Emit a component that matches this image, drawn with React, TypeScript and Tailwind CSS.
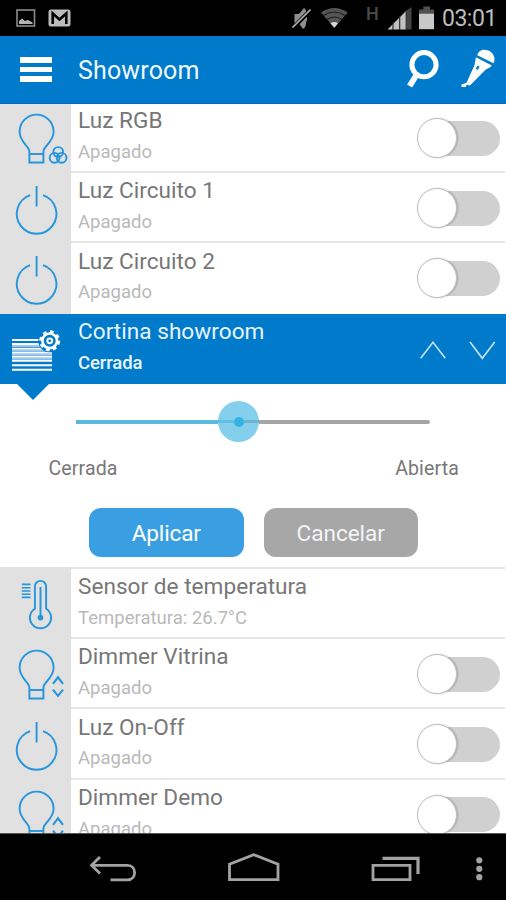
import React from "react";

type IconName = "rgb" | "power" | "thermo" | "dimmer";

function Bulb() {
  return (
    <g>
      <path d="M29.4 50.5 C29.4 45 19.6 41.5 19.6 30.6 A17 17 0 0 1 53.6 30.6 C53.6 41.5 43.4 45 43.4 50.5 V61.5 H29.4 Z" />
      <path d="M29.4 53 H43.4" />
    </g>
  );
}

function DeviceIcon({ name }: { name: IconName }) {
  return (
    <svg width="70" height="70" viewBox="0 0 70 70" fill="none" stroke="#2595dc" strokeWidth="1.9" className="block shrink-0">
      {name === "power" && (
        <g>
          <path d="M36.6 15 V35.5" />
          <path d="M30.2 24.2 A19.8 19.8 0 1 0 43 24.2" />
        </g>
      )}
      {(name === "rgb" || name === "dimmer") && <Bulb />}
      {name === "rgb" && (
        <g>
          <circle cx="58.2" cy="51" r="4.9" />
          <circle cx="54.6" cy="56.8" r="4.9" />
          <circle cx="61.6" cy="56.8" r="4.9" />
        </g>
      )}
      {name === "dimmer" && (
        <g strokeWidth="2.1">
          <path d="M53 46.8 L58 40.3 L63 46.8" />
          <path d="M53 52.6 L58 58.8 L63 52.6" />
        </g>
      )}
      {name === "thermo" && (
        <g>
          <path d="M34.9 41.7 V19.5 A5.6 5.6 0 0 1 46.1 19.5 V41.7 A10.6 10.6 0 1 1 34.9 41.7 Z" />
          <path d="M40.5 20 V50" />
          <circle cx="40.5" cy="50.6" r="1.9" fill="#2595dc" />
          <path d="M21.8 17.4 H30.5 M21.8 20.7 H30.5 M21.8 24 H30.5 M21.8 27.3 H30.5 M21.8 30.4 H30.5" strokeWidth="1.6" />
        </g>
      )}
    </svg>
  );
}

function Toggle() {
  return (
    <div className="mr-[5px] mt-[17.5px] flex h-[35px] w-[80px] shrink-0 items-center rounded-full bg-[#d0d0d0]">
      <div className="-ml-[3px] h-10 w-10 shrink-0 rounded-full border-[1.5px] border-[#bebebe] bg-white shadow-[1px_0_2px_rgba(0,0,0,0.2)]" />
    </div>
  );
}

type RowProps = { icon: IconName; title: string; status: string; height: string; toggle?: boolean };

function Row({ icon, title, status, height, toggle = true }: RowProps) {
  return (
    <div className={"flex shrink-0 " + height}>
      <div className="w-[70.5px] shrink-0 bg-[#e1e1e1]">
        <DeviceIcon name={icon} />
      </div>
      <div className="mr-px flex min-w-0 flex-1 items-start border-t-2 border-[#e7e7e7] pl-[7.5px]">
        <div className="flex-1 whitespace-nowrap pt-[4.3px]">
          <div className="text-[22.6px] leading-[28px] tracking-[0.02px] text-[#777777]">{title}</div>
          <div className="mt-[4.5px] text-[18.5px] leading-[24px] tracking-[0.02px] text-[#b9b9b9]">{status}</div>
        </div>
        {toggle && <Toggle />}
      </div>
    </div>
  );
}

function StatusBar() {
  return (
    <div className="flex h-9 shrink-0 items-center bg-black">
      <svg width="80" height="36" viewBox="0 0 80 36" className="block">
        <rect x="17" y="10" width="17.5" height="16" fill="none" stroke="#8c8c8c" strokeWidth="1.6" />
        <path d="M19 24 V21 L22 18.5 L25 21 L28 20 L32.5 22.5 V24 Z" fill="#b4b4b4" />
        <rect x="48.5" y="9.5" width="22" height="17" rx="2.5" fill="#bcbcbc" />
        <path d="M52.7 24 V13.5 L59.5 19.5 L66.3 13.5 V24" fill="none" stroke="#000" strokeWidth="2.6" />
      </svg>
      <div className="flex-1" />
      <svg width="150" height="36" viewBox="288 0 150 36" className="block">
        <path d="M294.5 14 H299 L304 8 Q307.5 11 306 15 Q308.5 19 306 22 Q306.5 27 303 29 L299 23.5 H294.5 Z" fill="#8f8f8f" />
        <path d="M292.5 28.5 L311 9.5" stroke="#000" strokeWidth="4" />
        <path d="M292.5 27.5 L310.5 9.5" stroke="#b5b5b5" strokeWidth="1.7" />
        <path d="M321 12.5 Q334.3 3.5 347.7 12.5 L334.3 28 Z" fill="#555" />
        <path d="M323.5 15.5 Q334.3 8.5 345 15.5 M327 19.5 Q334.3 14.5 342 19.5" fill="none" stroke="#191919" strokeWidth="1.2" />
        <path d="M330.5 23.3 Q334.3 20.5 338 23.3 L334.3 27.7 Z" fill="#d8d8d8" />
        <text x="366" y="19.7" fontFamily="Roboto, sans-serif" fontWeight="500" fontSize="18" fill="#4b4b4b">H</text>
        <path d="M387.5 29.5 L407 10 V29.5 Z" fill="#c1c1c1" />
        <path d="M406.5 10.5 L411.5 7 V29.5 H406.5 Z" fill="#444" />
        <path d="M393 22 V30 M399.7 16 V30 M406.2 10 V30" stroke="#222" strokeWidth="1.1" />
        <path d="M419 9.5 H423.3 V6.5 H430 V9.5 H434 V14 H419 Z" fill="#505050" />
        <rect x="419" y="13.7" width="15" height="15.5" fill="#c8c8c8" />
      </svg>
      <div className="w-[68px] whitespace-nowrap pl-[4px] pt-[2px] text-[23px] leading-[34px] tracking-[-0.5px] text-[#bdbdbd]">03:01</div>
    </div>
  );
}

function Header() {
  return (
    <div className="z-10 flex h-[68px] shrink-0 items-center border-b border-[#0868bd] bg-[#007aca]">
      <div className="ml-5 mr-[26.5px] flex w-[31.5px] flex-col gap-[4px]">
        <div className="h-[5.4px] bg-white" />
        <div className="h-[5.4px] bg-white" />
        <div className="h-[5.4px] bg-white" />
      </div>
      <div className="flex-1 pt-[2px] text-[25px] leading-[66px] tracking-[0.15px] text-[#f0f8ff]">Showroom</div>
      <svg width="106" height="67" viewBox="400 36 106 67" className="block">
        <circle cx="424" cy="64.7" r="12.1" fill="none" stroke="#fff" strokeWidth="5" />
        <path d="M416.8 74.5 L409.6 86" stroke="#fff" strokeWidth="5.8" />
        <path d="M477.3 55.3 C478 50 484 48.5 488.5 50.5 C493.5 52.8 496 58.5 493.5 63.3 Z" fill="#fff" />
        <path d="M475.9 57.3 L491.8 65.4 L490.2 67.3 L485.5 69.8 L471.7 83.8 Q469.7 86.8 467 84.8 Q465 86 466.2 87 H461.5 V84.5 L466.5 82.8 L474.5 65.2 Z" fill="#fff" />
        <path d="M478.5 66.2 L476.8 69.3" stroke="#007aca" strokeWidth="2.4" />
      </svg>
    </div>
  );
}

function ActiveRow() {
  return (
    <div className="flex h-[70px] shrink-0 bg-[#007aca]">
      <svg width="78" height="70" viewBox="0 0 78 70" className="block shrink-0" fill="none">
        <path d="M12 26 H46 M12 30 H46 M12 34.7 H52 M12 38.7 H52 M12 42.7 H52 M12 46.7 H52 M12 51.2 H52 M12 55.8 H52" stroke="#fff" strokeWidth="2" />
        <path d="M12 32 H52 M12 36.7 H52 M12 40.7 H52 M12 44.7 H52" stroke="#9dc9ec" strokeWidth="2" />
        <circle cx="49.7" cy="26.8" r="11.5" fill="#007aca" />
        <circle cx="49.7" cy="26.8" r="7.3" stroke="#fff" strokeWidth="2.6" />
        <circle cx="49.7" cy="26.8" r="9.2" stroke="#fff" strokeWidth="2.6" strokeDasharray="3.7 3.525" />
        <circle cx="49.7" cy="26.8" r="2.4" stroke="#fff" strokeWidth="2" />
      </svg>
      <div className="flex-1 whitespace-nowrap pt-[4.3px]">
        <div className="text-[22.6px] leading-[28px] tracking-[0.02px] text-[#e8f4ff]">Cortina showroom</div>
        <div className="mt-[4.5px] text-[18.5px] font-medium leading-[24px] tracking-[-0.1px] text-[#e8f4ff]">Cerrada</div>
      </div>
      <svg width="86" height="70" viewBox="420 0 86 70" fill="none" stroke="#c4e0f5" strokeWidth="1.7" className="block shrink-0">
        <path d="M420.7 44.3 L433 28.3 L445.3 44.3" />
        <path d="M470 28 L482.3 44.3 L494.7 28" />
      </svg>
    </div>
  );
}

function SliderPanel() {
  return (
    <div className="h-[183px] shrink-0 bg-white">
      <svg width="34" height="17" viewBox="0 0 34 17" className="ml-4 block">
        <path d="M1 0 H33 L17 16 Z" fill="#007aca" />
      </svg>
      <div className="ml-[76px] flex h-[42px] w-[354px] items-center">
        <div className="h-[3.5px] w-[142px] bg-[#5bb8e0]" />
        <div className="flex h-[41px] w-[41px] shrink-0 items-center rounded-full bg-[#84d0ec]">
          <div className="h-[3px] w-[15.5px] bg-[#5fbfe5]" />
          <div className="h-[10px] w-[10px] rounded-full bg-[#33b2e5]" />
          <div className="h-[3px] w-[15.5px] bg-[#6cb4cd]" />
        </div>
        <div className="h-[3.5px] flex-1 rounded-r-full bg-[#a5a5a5]" />
      </div>
      <div className="ml-[48.5px] mr-[47px] mt-[14px] flex justify-between text-[19.5px] leading-[24px] tracking-[0.15px] text-[#777777]">
        <span>Cerrada</span>
        <span>Abierta</span>
      </div>
      <div className="mt-[27px] flex gap-[20px] pl-[89px]">
        <button className="h-[49px] w-[154.5px] rounded-[12px] bg-[#3a9fe2] pt-[2px] text-[22.6px] leading-[47px] tracking-[-0.15px] text-white">Aplicar</button>
        <button className="h-[49px] w-[154.5px] rounded-[12px] bg-[#a7a7a7] pt-[2px] text-[22.6px] leading-[47px] tracking-[-0.05px] text-[#f4f4f4]">Cancelar</button>
      </div>
    </div>
  );
}

function NavBar() {
  return (
    <div className="h-[67px] shrink-0 border-t border-[#555] bg-black">
      <svg width="506" height="66" viewBox="0 834 506 66" fill="none" stroke="#a3a3a3" strokeWidth="2.8" className="block">
        <path d="M91 865.3 H127.5 C137 865.3 137 879.8 127.5 879.8 H110.5 M100 857 L91.5 865.3 L100 873.5" />
        <path d="M229.5 879.7 V864.3 L253.7 854.7 L278 864.3 V879.7 Z" />
        <path d="M373 865.3 H410 V879.7 H373 Z" />
        <path d="M382.5 858.3 H418 V874" strokeWidth="3.2" />
        <g fill="#a3a3a3" stroke="none">
          <circle cx="479.3" cy="860.3" r="3.1" />
          <circle cx="479.3" cy="868.8" r="3.1" />
          <circle cx="479.3" cy="877.2" r="3.1" />
        </g>
      </svg>
    </div>
  );
}

export default function App() {
  return (
    <div className="flex h-[900px] w-[506px] flex-col overflow-hidden bg-white font-['Roboto',sans-serif]">
      <StatusBar />
      <Header />
      <main className="min-h-0 flex-1 overflow-hidden">
        <div className="-mt-[3px] flex flex-col">
          <Row icon="rgb" title="Luz RGB" status="Apagado" height="h-[70.2px]" />
          <Row icon="power" title="Luz Circuito 1" status="Apagado" height="h-[70.2px]" />
          <Row icon="power" title="Luz Circuito 2" status="Apagado" height="h-[72.6px]" />
          <ActiveRow />
          <SliderPanel />
          <Row icon="thermo" title="Sensor de temperatura" status="Temperatura: 26.7°C" height="h-[70.2px]" toggle={false} />
          <Row icon="dimmer" title="Dimmer Vitrina" status="Apagado" height="h-[70.3px]" />
          <Row icon="power" title="Luz On-Off" status="Apagado" height="h-[70.3px]" />
          <Row icon="dimmer" title="Dimmer Demo" status="Apagado" height="h-[70px]" />
        </div>
      </main>
      <NavBar />
    </div>
  );
}
